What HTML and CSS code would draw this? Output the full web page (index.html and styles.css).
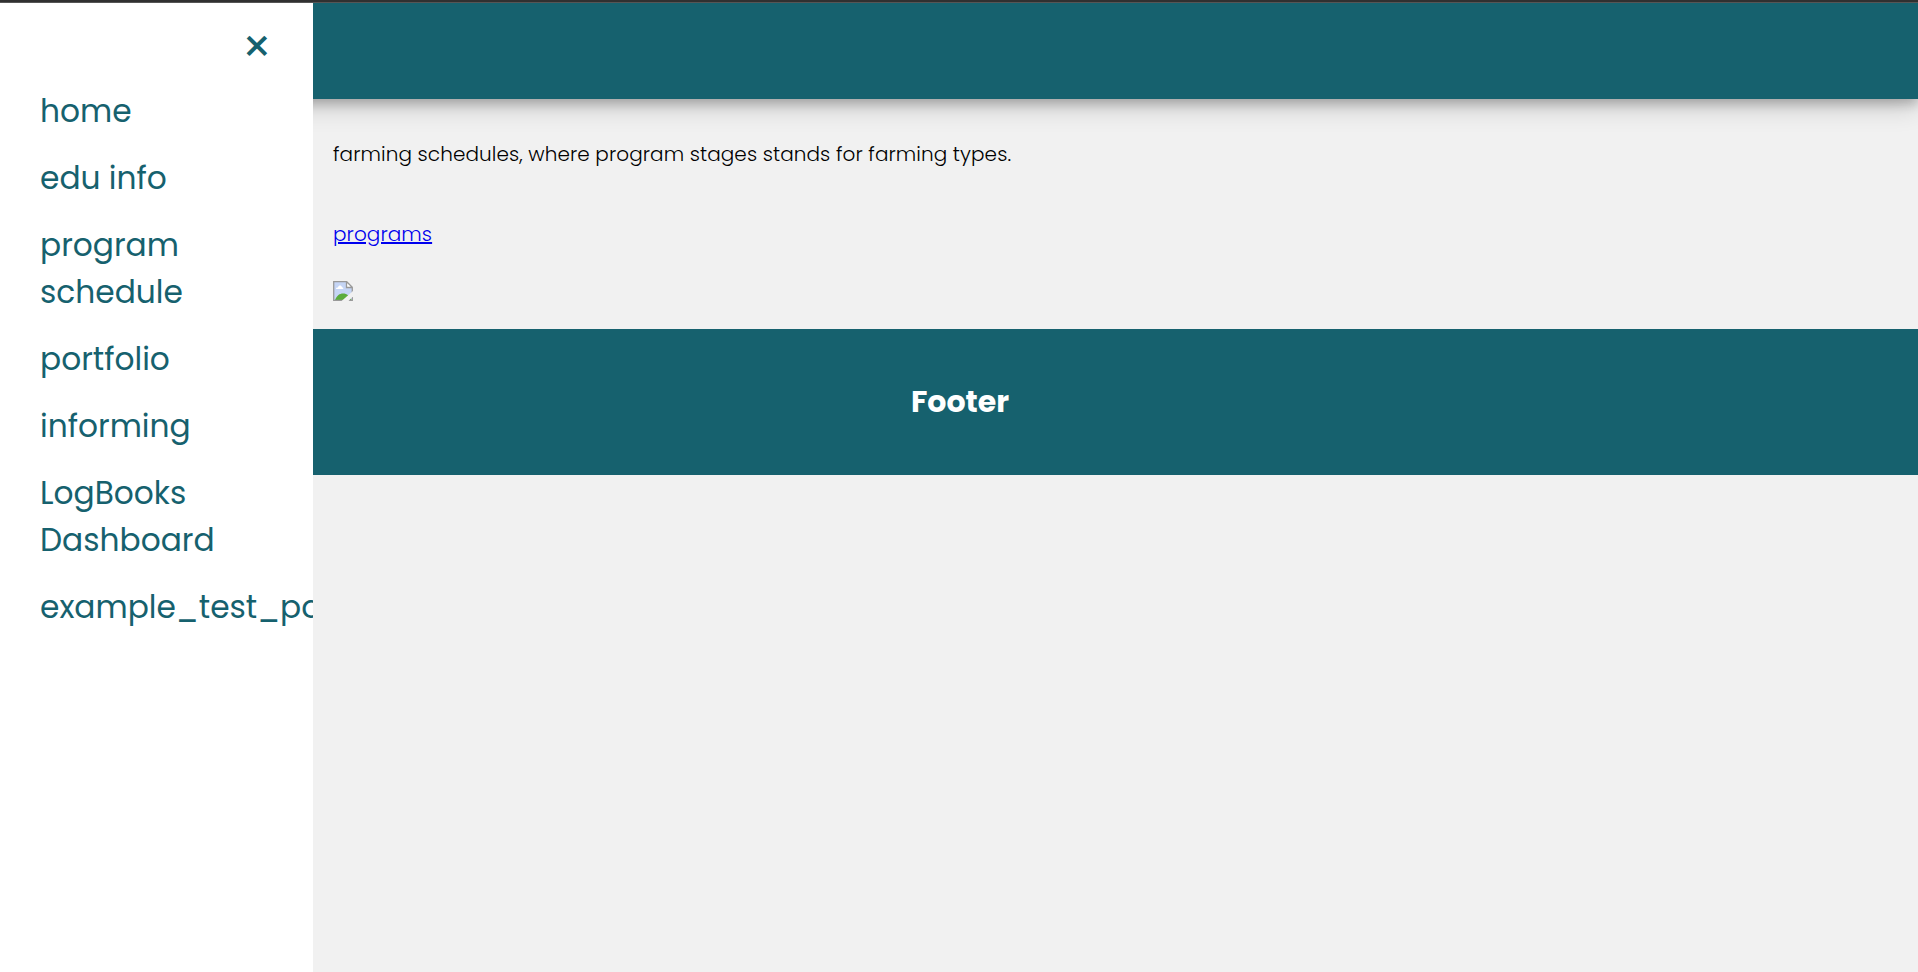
FILE: index.html
```html
<!DOCTYPE html>
<html lang="en">
<head>
<meta charset="utf-8">
<title>programs</title>
<link rel="stylesheet" href="styles.css">
</head>
<body>
<div class="topline"></div>
<header class="header"></header>
<main class="main">
  <p class="intro">farming schedules, where program stages stands for farming types.</p>
  <p class="link"><a href="#">programs</a></p>
  <svg class="picture" viewBox="0 0 20 20" width="20" height="20">
    <path d="M1 1h12.5l5.5 5.500V19H1z" fill="#c5d5f5"/>
    <path d="M3 8c0-1.500 1.500-1.800 2-1.500C5.500 4 8.500 4 9 6.200c1 0 1.500.8 1.200 1.800z" fill="#fff"/>
    <path d="M2 19c2-4.500 4.500-6.500 8-6.500 4 0 6.500 2.500 8.500 6.500z" fill="#5aac3c"/>
    <path d="M13.500 1v5.500H19z" fill="#fff"/>
    <path d="M19.300 20V6.300L13.700.700H.700v18.600h18.600M13.500 1v5.500H19" fill="none" stroke="#999" stroke-width="1.300"/>
    <path d="M8 20.500 21 9v5.500l-6 6z" fill="#f1f1f1"/>
  </svg>
</main>
<footer class="footer"><h2 class="footer-title">Footer</h2></footer>
<nav class="sidebar">
  <a class="close" href="#">×</a>
  <ul class="menu">
    <li><a href="#">home</a></li>
    <li><a href="#">edu info</a></li>
    <li><a href="#">program schedule</a></li>
    <li><a href="#">portfolio</a></li>
    <li><a href="#">informing</a></li>
    <li><a href="#">LogBooks Dashboard</a></li>
    <li><a href="#">example_test_page</a></li>
  </ul>
</nav>
</body>
</html>
```

FILE: styles.css
```css
* { box-sizing: border-box; }
html, body { height: 100%; overflow: hidden; }
body {
  margin: 0;
  background: #f1f1f1;
  color: #000;
  font-family: Poppins, Inter, sans-serif;
  font-size: 20px;
}
.topline { height: 3px; background: #333; border-bottom: 1px solid #5c5c5c; }
.header {
  height: 96px;
  background: #16616e;
  box-shadow: 0 5px 10px rgba(0, 0, 0, .2), 0 7.5px 25px rgba(0, 0, 0, .19);
}
.main {
  height: 230px;
  padding: 40px 20px 0 333px;
  font-weight: 300;
  letter-spacing: .08px;
}
.intro, .link { margin: 0; line-height: 30px; }
.link { margin-top: 50px; }
.link a { color: #00e; }
.picture { display: block; margin-top: 32px; }
.footer {
  display: flex;
  align-items: center;
  justify-content: center;
  height: 146px;
  padding-bottom: 2px;
  background: #16616e;
  color: #fff;
}
.footer-title { margin: 0; padding-left: 2px; font-size: 30px; font-weight: 700; line-height: 45px; }
.sidebar {
  position: absolute;
  top: 3px;
  left: 0;
  bottom: 0;
  width: 313px;
  padding: 19px 40px 0;
  overflow: hidden;
  background: #fff;
}
.sidebar a { color: #16616e; text-decoration: none; }
.close {
  display: block;
  margin-right: 1px;
  text-align: right;
  font-size: 47px;
  font-weight: 400;
  line-height: 50px;
}
.menu { margin: 16px 0 0; padding: 0; list-style: none; font-size: 31.25px; line-height: 47px; }
.menu li { margin-bottom: 20px; }
```
